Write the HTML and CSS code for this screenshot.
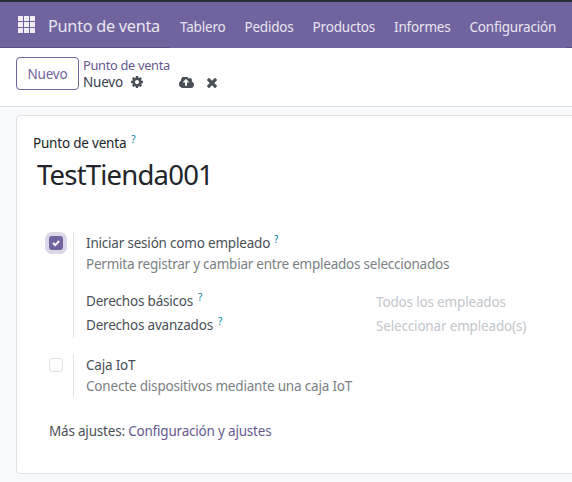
FILE: index.html
```html
<!DOCTYPE html>
<html lang="es">
<head>
<meta charset="utf-8">
<title>Punto de venta</title>
<link rel="stylesheet" href="styles.css">
</head>
<body>
<header class="navbar">
  <svg class="apps" viewBox="0 0 17 17" width="17" height="17"><path d="M0 0h5v5H0zM6 0h5v5H6zM12 0h5v5h-5zM0 6h5v5H0zM6 6h5v5H6zM12 6h5v5h-5zM0 12h5v5H0zM6 12h5v5H6zM12 12h5v5h-5z"/></svg>
  <span class="brand">Punto de venta</span>
  <nav class="menu">
    <a>Tablero</a><a>Pedidos</a><a>Productos</a><a>Informes</a><a>Configuración</a>
  </nav>
</header>
<section class="control">
  <button class="new">Nuevo</button>
  <div class="crumbs">
    <a class="parent">Punto de venta</a>
    <div class="current">
      <span>Nuevo</span>
      <svg class="gear" viewBox="0 128 1536 1536" width="12" height="12"><path d="M1024 896q0-106-75-181t-181-75-181 75-75 181 75 181 181 75 181-75 75-181zm512-109v222q0 12-8 23t-20 13l-185 28q-19 54-39 91 35 50 107 138 10 12 10 25t-9 23q-27 37-99 108t-94 71q-12 0-26-9l-138-108q-44 23-91 38-16 136-29 186-7 28-36 28h-222q-14 0-24.500-8.500t-11.500-21.500l-28-184q-49-16-90-37l-141 107q-10 9-25 9-14 0-25-11-126-114-165-168-7-10-7-23 0-12 8-23 15-21 51-66.500t54-70.500q-27-50-41-99l-183-27q-13-2-21-12.500t-8-23.500v-222q0-12 8-23t19-13l186-28q14-46 39-92-40-57-107-138-10-12-10-24 0-10 9-23 26-36 98.500-107.500t94.500-71.500q13 0 26 10l138 107q44-23 91-38 16-136 29-186 7-28 36-28h222q14 0 24.500 8.500t11.500 21.500l28 184q49 16 90 37l142-107q9-9 24-9 13 0 25 10 129 119 165 170 7 8 7 22 0 12-8 23-15 21-51 66.500t-54 70.500q26 50 41 98l183 28q13 2 21 12.500t8 23.500z"/></svg>
      <svg class="cloud" viewBox="0 256 1920 1280" width="15" height="11" preserveAspectRatio="none"><path d="M1280 864q0-14-9-23l-352-352q-9-9-23-9t-23 9l-351 351q-10 12-10 24 0 14 9 23t23 9h224v352q0 13 9.500 22.500t22.500 9.500h192q13 0 22.500-9.500t9.500-22.500v-352h224q13 0 22.500-9.500t9.500-22.500zm640 288q0 159-112.500 271.500t-271.500 112.500h-1088q-185 0-316.500-131.500t-131.500-316.500q0-130 70-240t188-165q-2-30-2-43 0-212 150-362t362-150q156 0 285.500 87t188.500 231q71-62 166-62 106 0 181 75t75 181q0 76-41 138 130 31 213.500 135.500t83.500 238.500z"/></svg>
      <svg class="discard" viewBox="110 366 1188 1188" width="10" height="10"><path d="M1298 1322q0 40-28 68l-136 136q-28 28-68 28t-68-28l-294-294-294 294q-28 28-68 28t-68-28l-136-136q-28-28-28-68t28-68l294-294-294-294q-28-28-28-68t28-68l136-136q28-28 68-28t68 28l294 294 294-294q28-28 68-28t68 28l136 136q28 28 28 68t-28 68l-294 294 294 294q28 28 28 68z"/></svg>
    </div>
  </div>
</section>
<main class="sheet">
  <div class="field-label"><span>Punto de venta</span><sup>?</sup></div>
  <h1>TestTienda001</h1>
  <section class="setting login">
    <span class="box checked"><svg viewBox="0 0 14 14" width="14" height="14"><path d="M4 7 6.200 9.100 10.200 5"/></svg></span>
    <div class="body">
      <div class="title"><span>Iniciar sesión como empleado</span><sup>?</sup></div>
      <p class="help select-help">Permita registrar y cambiar entre empleados seleccionados</p>
      <div class="rights">
        <div class="row"><div class="title"><span>Derechos básicos</span><sup>?</sup></div><span class="hint">Todos los empleados</span></div>
        <div class="row"><div class="title"><span>Derechos avanzados</span><sup>?</sup></div><span class="hint">Seleccionar empleado(s)</span></div>
      </div>
    </div>
  </section>
  <section class="setting iot">
    <span class="box"></span>
    <div class="body">
      <div class="title"><span>Caja IoT</span></div>
      <p class="help iot-help">Conecte dispositivos mediante una caja IoT</p>
    </div>
  </section>
  <p class="more"><span>Más ajustes: </span><a>Configuración y ajustes</a></p>
</main>
</body>
</html>
```
FILE: styles.css
```css
* { box-sizing: border-box; }
body {
  margin: 0;
  height: 482px;
  overflow: hidden;
  background: #f8f9fb;
  color: #495057;
  font: 13.5px/21px "Noto Sans", "Open Sans", sans-serif;
  letter-spacing: -0.2px;
}
p, h1 { margin: 0; }
span, a { white-space: nowrap; }
svg { display: block; flex: none; }

.navbar {
  display: flex;
  align-items: center;
  height: 48px;
  padding: 4px 0 0 18px;
  border-top: 2px solid #262a36;
  background:
    linear-gradient(#5a4f7f, #5a4f7f) 0 100% / 170px 1px no-repeat,
    linear-gradient(#5a4f7f, #5a4f7f) 100% 100% / 6px 1px no-repeat,
    #71639e;
  color: #e9e6f1;
}
.apps { fill: #f0eef5; margin-top: -5px; }
.brand { flex: none; margin: -2px 0 0 13px; width: 132px; font-size: 16.3px; line-height: 24px; letter-spacing: -0.28px; }
.menu { display: flex; }
.menu a { margin-right: 19px; }

.control {
  display: flex;
  height: 59px;
  padding: 9px 0 0 16px;
  border-bottom: 1px solid #dee2e6;
  background: #fff;
}
.new {
  width: 63px;
  height: 33px;
  padding: 2px 0 0;
  border: 1px solid #71639e;
  border-radius: 4px;
  background: #fff;
  color: #71639e;
  font: inherit;
  letter-spacing: inherit;
}
.crumbs { margin-left: 4px; line-height: 17px; }
.parent, .more a { color: #66598f; }
.parent { display: block; font-size: 12.8px; letter-spacing: -0.3px; }
.current { display: flex; align-items: center; color: #374151; }
.current span { width: 41px; }
.current svg { fill: #495057; }
.gear { margin: -1px 0 0 7px; }
.cloud { margin: -1px 0 0 36px; }
.discard { margin-left: 13px; }

.sheet {
  height: 359px;
  margin: 8px -5px 0 16px;
  padding: 17px 0 0 16px;
  border: 1px solid #dee2e6;
  border-radius: 4px;
  background: #fff;
}
.field-label { display: flex; color: #212529; }
sup {
  margin: -4px 0 0 5px;
  color: #017e9b;
  font-size: 10px;
  line-height: 20px;
  letter-spacing: 0;
}
h1 { margin: 3px 0 0 4px; color: #212529; font-size: 27.5px; font-weight: 400; line-height: 36px; letter-spacing: -0.8px; }

.setting { display: flex; margin-left: 16px; }
.login { margin-top: 39px; }
.iot { margin-top: 16px; }
.box {
  width: 14px;
  height: 14px;
  margin: 4px 10px 0 0;
  border: 1px solid #dee2e6;
  border-radius: 3px;
}
.checked { border: 0; background: #71639e; box-shadow: 0 0 0 4px #dcd8e7; }
.checked path { fill: none; stroke: #fff; stroke-width: 1.900; }
.body { padding: 1px 0 0 12px; border-left: 1px solid #dee2e6; }
.login .body { height: 106px; }
.iot .body { height: 42px; }
.title { display: flex; }
.login .body > .title sup { margin-left: 4px; }
.help { color: #7a7f84; }
.select-help { letter-spacing: -0.235px; }
.iot-help { letter-spacing: -0.18px; }
.rights { margin-top: 16px; }
.row { display: flex; height: 24px; }
.row .title { width: 290px; }
.hint { color: #c2c7cc; padding-top: 1px; letter-spacing: -0.17px; }
.more { margin: 25px 0 0 16px; white-space: pre; }
```
